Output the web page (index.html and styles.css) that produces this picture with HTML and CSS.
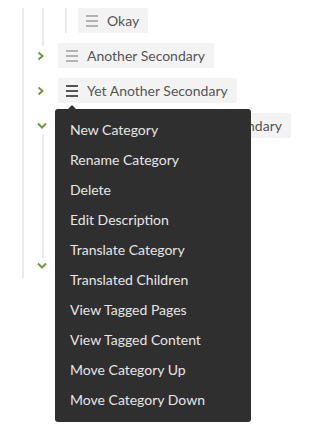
FILE: index.html
```html
<!DOCTYPE html>
<html lang="en">
<head>
    <meta charset="UTF-8">
    <title>Categories</title>
    <link rel="stylesheet" href="styles.css">
</head>
<body>

<div class="tree">
    <div class="children level-two">
        <div class="children level-three">
            <div class="row">
                <span class="pill"><svg class="handle" width="12" height="12" viewBox="0 0 12 12"><rect y="0" width="12" height="2"/><rect y="5" width="12" height="2"/><rect y="10" width="12" height="2"/></svg>Okay</span>
            </div>
        </div>
    </div>

    <div class="row">
        <span class="toggle"><svg width="8" height="10" viewBox="0 0 8 10"><polyline points="1.5,1.5 5.5,5 1.5,8.5"/></svg></span>
        <span class="pill"><svg class="handle" width="12" height="12" viewBox="0 0 12 12"><rect y="0" width="12" height="2"/><rect y="5" width="12" height="2"/><rect y="10" width="12" height="2"/></svg>Another Secondary</span>
    </div>

    <div class="row">
        <span class="toggle"><svg width="8" height="10" viewBox="0 0 8 10"><polyline points="1.5,1.5 5.5,5 1.5,8.5"/></svg></span>
        <span class="pill active"><svg class="handle" width="12" height="12" viewBox="0 0 12 12"><rect y="0" width="12" height="2"/><rect y="5" width="12" height="2"/><rect y="10" width="12" height="2"/></svg>Yet Another Secondary

            <!-- menu opened from the handle -->
            <ul class="menu">
                <li>New Category</li>
                <li>Rename Category</li>
                <li>Delete</li>
                <li>Edit Description</li>
                <li>Translate Category</li>
                <li>Translated Children</li>
                <li>View Tagged Pages</li>
                <li>View Tagged Content</li>
                <li>Move Category Up</li>
                <li>Move Category Down</li>
            </ul>
        </span>
    </div>

    <div class="row">
        <span class="toggle open"><svg width="10" height="7" viewBox="0 0 10 7"><polyline points="1,1.5 5,5.5 9,1.5"/></svg></span>
        <span class="pill"><svg class="handle" width="12" height="12" viewBox="0 0 12 12"><rect y="0" width="12" height="2"/><rect y="5" width="12" height="2"/><rect y="10" width="12" height="2"/></svg>And Still Yet Another Secondary</span>
    </div>

    <div class="children level-two open-list">
        <div class="row child">
            <span class="pill"><svg class="handle" width="12" height="12" viewBox="0 0 12 12"><rect y="0" width="12" height="2"/><rect y="5" width="12" height="2"/><rect y="10" width="12" height="2"/></svg>First</span>
        </div>
        <div class="row child">
            <span class="pill"><svg class="handle" width="12" height="12" viewBox="0 0 12 12"><rect y="0" width="12" height="2"/><rect y="5" width="12" height="2"/><rect y="10" width="12" height="2"/></svg>Second</span>
        </div>
        <div class="row child">
            <span class="pill"><svg class="handle" width="12" height="12" viewBox="0 0 12 12"><rect y="0" width="12" height="2"/><rect y="5" width="12" height="2"/><rect y="10" width="12" height="2"/></svg>Third</span>
        </div>
    </div>

    <div class="row">
        <span class="toggle open"><svg width="10" height="7" viewBox="0 0 10 7"><polyline points="1,1.5 5,5.5 9,1.5"/></svg></span>
        <span class="pill"><svg class="handle" width="12" height="12" viewBox="0 0 12 12"><rect y="0" width="12" height="2"/><rect y="5" width="12" height="2"/><rect y="10" width="12" height="2"/></svg>Last Secondary</span>
    </div>
</div>

</body>
</html>
```

FILE: styles.css
```css
html, body {
    min-height: 444px;
}
body {
    font-family: Lato, 'Open Sans', sans-serif;
    background-color: white;
    margin: 0;
    padding: 0;
    color: #555;
    font-size: 14px;
}
.tree {
    margin-left: 22px;
    border-left: 2px solid #ebebeb;
    width: 280px;
}
.children {
    border-left: 2px solid #ebebeb;
}
.level-two {
    margin-left: 18px;
    padding-bottom: 13px;
    margin-bottom: -13px;
}
.level-three {
    margin-left: 21px;
}
.level-three .row {
    margin-top: 8px;
    margin-left: 11px;
}
.open-list {
    margin-top: -3px;
    padding-top: 3px;
    padding-bottom: 15px;
    margin-bottom: -15px;
}
.open-list .child {
    margin-left: 34px;
}
.row {
    display: flex;
    align-items: center;
    margin-top: 10px;
}
.toggle {
    width: 34px;
    padding-left: 13px;
    box-sizing: border-box;
    display: flex;
    align-items: center;
}
.toggle svg {
    fill: none;
    stroke: #6e9a3e;
    stroke-width: 2;
}
.pill {
    position: relative;
    display: inline-flex;
    align-items: center;
    height: 25px;
    line-height: 25px;
    padding: 0 9px 0 8px;
    background-color: #f3f3f3;
    border-radius: 2px;
    white-space: nowrap;
}
.handle {
    fill: #b3b3b3;
    margin-right: 9px;
}
.active .handle {
    fill: #555;
}
.menu {
    position: absolute;
    left: -3px;
    top: 31px;
    width: 196px;
    margin: 0;
    padding: 6px 0 7px;
    list-style-type: none;
    background-color: #2f2f2f;
    border-radius: 3px;
    z-index: 2;
}
.menu:before {
    content: '';
    position: absolute;
    left: 13px;
    top: -4px;
    border-left: 4px solid transparent;
    border-right: 4px solid transparent;
    border-bottom: 4px solid #2f2f2f;
}
.menu li {
    padding-left: 15px;
    line-height: 30px;
    color: #e6e6e6;
}
```
